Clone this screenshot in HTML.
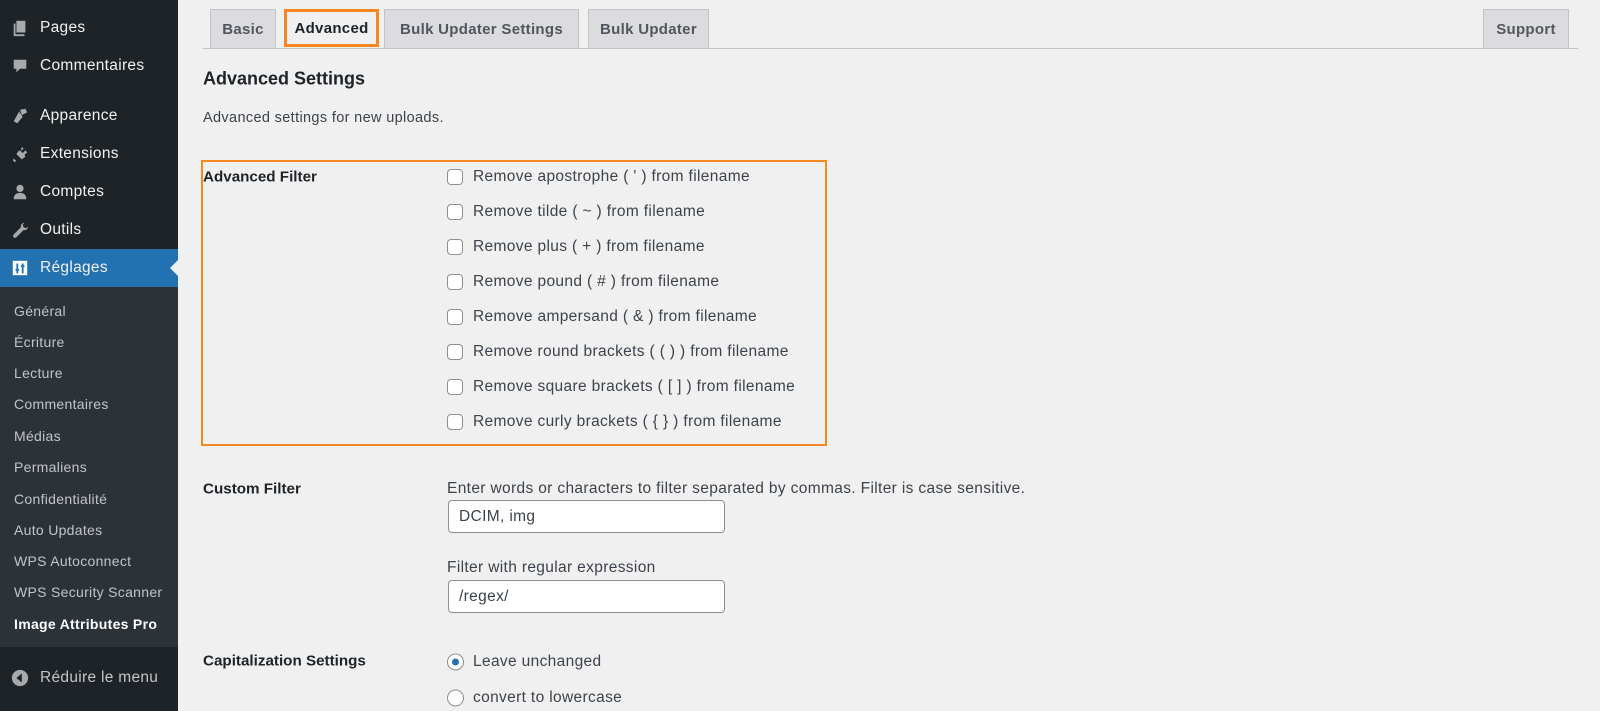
<!DOCTYPE html>
<html><head><meta charset="utf-8"><style>
*{box-sizing:border-box;margin:0;padding:0}
body{width:1600px;height:711px;overflow:hidden;background:#f0f0f1;font-family:"Liberation Sans",sans-serif;color:#1d2327;position:relative}
.sb{position:absolute;left:0;top:0;width:178px;height:711px;background:#1d2327}
.sub{position:absolute;left:0;top:287px;width:178px;height:360px;background:#2c3338}
.act{position:absolute;left:0;top:249px;width:178px;height:38px;background:#2271b1}
.arrow{position:absolute;left:170px;top:260px;width:0;height:0;border-top:8px solid transparent;border-bottom:8px solid transparent;border-right:8px solid #f0f0f1}
.mi{position:absolute;left:40px;font-size:15.5px;letter-spacing:.3px;color:#f0f0f1;transform:translateY(-50%);white-space:nowrap}
.ic{position:absolute;left:11px;width:18px;height:18px;transform:translateY(-50%)}
.si{position:absolute;left:14px;font-size:14px;letter-spacing:.3px;color:#c3c4c7;transform:translateY(-50%);white-space:nowrap}
.t{position:absolute;transform:translateY(-50%);white-space:nowrap}
.tab{position:absolute;top:9px;height:39px;background:#dcdcde;border:1px solid #c3c4c7;border-bottom:none;font-size:15px;letter-spacing:.3px;font-weight:bold;color:#50575e;display:flex;align-items:center;justify-content:center}
.cb{position:absolute;left:447px;width:16px;height:16px;border:1px solid #8c8f94;border-radius:4px;background:#fff;transform:translateY(-50%)}
.lb{left:473px;font-size:15.5px;letter-spacing:.35px;color:#3c434a}
.h{font-size:15.2px;font-weight:bold;left:203px}
.inp{position:absolute;left:448px;width:277px;height:33px;border:1px solid #8c8f94;border-radius:4px;background:#fff;font-size:15.5px;letter-spacing:.35px;color:#3c434a;padding-left:10px;line-height:31px}
.rd{position:absolute;left:447px;width:17px;height:17px;border:1px solid #8c8f94;border-radius:50%;background:#fff;transform:translateY(-50%)}
</style></head><body>
<div class="sb"></div><div class="sub"></div><div class="act"></div><div class="arrow"></div>
<div style="position:absolute;left:0;top:647px;width:178px;height:64px;background:#1d2327"></div>

<svg class="ic" style="top:28px" viewBox="0 0 20 20"><path fill="#a7aaad" d="M6 2h10v13H6z"/><path fill="#a7aaad" d="M3 5h2v12h10v2H3z"/></svg>
<div class="mi" style="top:28px">Pages</div>
<svg class="ic" style="top:66px" viewBox="0 0 20 20"><path fill="#a7aaad" d="M3 3h14v10H10l-4 4v-4H3z"/></svg>
<div class="mi" style="top:66px">Commentaires</div>
<svg class="ic" style="top:116px" viewBox="0 0 20 20"><path fill="#a7aaad" d="M10 3l6-1 2 4-6 3zM9 5l4 6-6 7-4-2z"/></svg>
<div class="mi" style="top:116px">Apparence</div>
<svg class="ic" style="top:154px" viewBox="0 0 20 20"><path fill="#a7aaad" d="M12 2l2 2-3 3 2 2 3-3 2 2-3 3 1 2-4 3-6-6 3-4 2 1zM3 15l3 3-2 1-2-2z"/></svg>
<div class="mi" style="top:154px">Extensions</div>
<svg class="ic" style="top:192px" viewBox="0 0 20 20"><circle cx="10" cy="6" r="4" fill="#a7aaad"/><path fill="#a7aaad" d="M3 18c0-5 3-7 7-7s7 2 7 7z"/></svg>
<div class="mi" style="top:192px">Comptes</div>
<svg class="ic" style="top:230px" viewBox="0 0 20 20"><path fill="#a7aaad" d="M15 2a4 4 0 00-4 5L3 15a2 2 0 003 3l8-8a4 4 0 005-4l-2 2-3-1-1-3z"/></svg>
<div class="mi" style="top:230px">Outils</div>
<svg class="ic" style="top:268px" viewBox="0 0 20 20"><rect x="2" y="2" width="16" height="16" fill="#fff"/><path stroke="#2271b1" stroke-width="2" d="M7 5v11M13 5v11M5 12h4M11 8h4"/></svg>
<div class="mi" style="top:268px">Réglages</div>

<div class="si" style="top:311px">Général</div>
<div class="si" style="top:342px">Écriture</div>
<div class="si" style="top:373px">Lecture</div>
<div class="si" style="top:404px">Commentaires</div>
<div class="si" style="top:436px">Médias</div>
<div class="si" style="top:467px">Permaliens</div>
<div class="si" style="top:499px">Confidentialité</div>
<div class="si" style="top:530px">Auto Updates</div>
<div class="si" style="top:561px">WPS Autoconnect</div>
<div class="si" style="top:592px">WPS Security Scanner</div>
<div class="si" style="top:624px;color:#fff;font-weight:bold">Image Attributes Pro</div>
<svg class="ic" style="top:678px" viewBox="0 0 20 20"><circle cx="10" cy="10" r="9" fill="#a7aaad"/><path fill="#1d2327" d="M12 5v10L6 10z"/></svg>
<div class="mi" style="top:678px;color:#c3c4c7">Réduire le menu</div>

<div style="position:absolute;left:203px;top:48px;width:1375px;height:1px;background:#c3c4c7"></div>
<div class="tab" style="left:210px;width:66px">Basic</div>
<div class="tab" style="left:284px;width:95px;background:#f0f0f1;border:3px solid #f5891f;color:#1d2327;height:38px">Advanced</div>
<div class="tab" style="left:384px;width:195px">Bulk Updater Settings</div>
<div class="tab" style="left:588px;width:121px">Bulk Updater</div>
<div class="tab" style="left:1483px;width:86px">Support</div>

<div class="t" style="left:203px;top:79px;font-size:18px;font-weight:bold">Advanced Settings</div>
<div class="t" style="left:203px;top:118px;font-size:14.5px;letter-spacing:.35px;color:#3c434a">Advanced settings for new uploads.</div>

<div style="position:absolute;left:201px;top:160px;width:626px;height:286px;border:2px solid #f5891f"></div>
<div class="t h" style="top:177px">Advanced Filter</div>
<div class="cb" style="top:177px"></div><div class="t lb" style="top:177px">Remove apostrophe ( ' ) from filename</div>
<div class="cb" style="top:212px"></div><div class="t lb" style="top:212px">Remove tilde ( ~ ) from filename</div>
<div class="cb" style="top:247px"></div><div class="t lb" style="top:247px">Remove plus ( + ) from filename</div>
<div class="cb" style="top:282px"></div><div class="t lb" style="top:282px">Remove pound ( # ) from filename</div>
<div class="cb" style="top:317px"></div><div class="t lb" style="top:317px">Remove ampersand ( &amp; ) from filename</div>
<div class="cb" style="top:352px"></div><div class="t lb" style="top:352px">Remove round brackets ( ( ) ) from filename</div>
<div class="cb" style="top:387px"></div><div class="t lb" style="top:387px">Remove square brackets ( [ ] ) from filename</div>
<div class="cb" style="top:422px"></div><div class="t lb" style="top:422px">Remove curly brackets ( { } ) from filename</div>

<div class="t h" style="top:489px">Custom Filter</div>
<div class="t lb" style="left:447px;top:489px">Enter words or characters to filter separated by commas. Filter is case sensitive.</div>
<div class="inp" style="top:500px">DCIM, img</div>
<div class="t lb" style="left:447px;top:568px">Filter with regular expression</div>
<div class="inp" style="top:580px">/regex/</div>

<div class="t h" style="top:661px">Capitalization Settings</div>
<div class="rd" style="top:662px"><div style="position:absolute;left:4px;top:4px;width:7px;height:7px;border-radius:50%;background:#2271b1"></div></div>
<div class="t lb" style="top:662px">Leave unchanged</div>
<div class="rd" style="top:698px"></div>
<div class="t lb" style="top:698px">convert to lowercase</div>
</body></html>
